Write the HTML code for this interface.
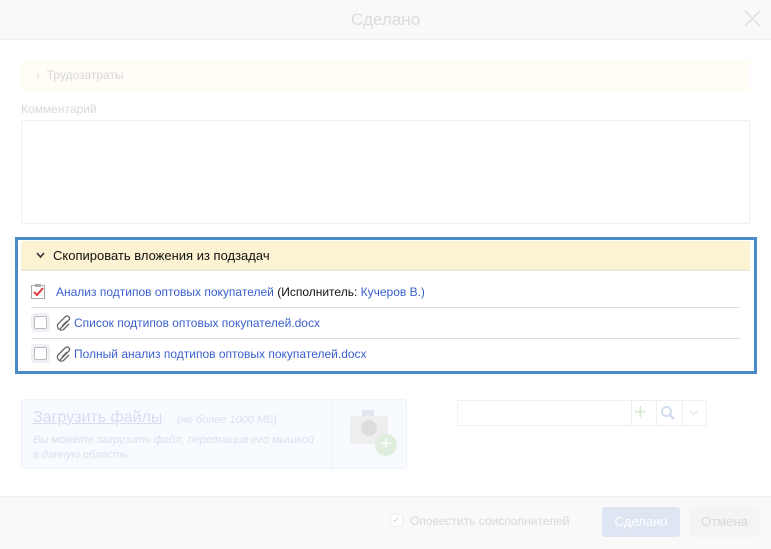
<!DOCTYPE html>
<html><head><meta charset="utf-8"><style>
*{box-sizing:border-box;margin:0;padding:0}
body{width:771px;height:549px;background:#fff;font-family:"Liberation Sans",sans-serif;position:relative;overflow:hidden;font-size:12px}
.a{position:absolute}
</style></head><body>
<div class="a" style="left:0;top:0;width:771px;height:40px;background:#f9f9f9;border-bottom:1px solid #f0f0f0"></div>
<div class="a" style="left:0;top:10px;width:771px;text-align:center;font-size:17px;color:#dcdcdc">Сделано</div>
<svg class="a" style="left:744px;top:10px" width="17" height="17"><path d="M1 1L16 16M16 1L1 16" stroke="#e2e2e2" stroke-width="1.6"/></svg>
<div class="a" style="left:21px;top:60px;width:729px;height:31px;background:#fffdf6"></div>
<div class="a" style="left:36px;top:68px;color:#d8d8d8;font-size:12px">›&nbsp; Трудозатраты</div>
<div class="a" style="left:21px;top:102px;color:#d8d8d8;font-size:12px">Комментарий</div>
<div class="a" style="left:21px;top:120px;width:729px;height:104px;border:1px solid #f0f0f0"></div>
<div class="a" style="left:15px;top:237px;width:742px;height:137px;border:3px solid #4a8ac6"></div>
<div class="a" style="left:21px;top:241px;width:729px;height:30px;background:#fcf3d2;border-bottom:2px solid #f0ead8"></div>
<svg class="a" style="left:36px;top:252px" width="9" height="7"><path d="M1 1L4.5 5L8 1" stroke="#333" stroke-width="1.6" fill="none"/></svg>
<div class="a" style="left:53px;top:248px;font-size:13px;color:#111">Скопировать вложения из подзадач</div>
<svg class="a" style="left:30px;top:283px" width="16" height="16"><rect x="1.5" y="2.5" width="13" height="13" fill="#fff" stroke="#aaa"/><rect x="5" y="1" width="6" height="3" fill="#aaa"/><path d="M4 9L7 12L13 5" stroke="#e0393e" stroke-width="2" fill="none"/></svg>
<div class="a" style="left:56px;top:285px;font-size:12px;color:#111"><span style="color:#3a5fcd">Анализ подтипов оптовых покупателей</span> (Исполнитель: <span style="color:#3a5fcd">Кучеров В.)</span></div>
<div class="a" style="left:31px;top:307px;width:709px;border-top:1px solid #ddd"></div>
<div class="a" style="left:31px;top:338px;width:709px;border-top:1px solid #ddd"></div>
<div class="a" style="left:31px;top:313px;width:19px;height:19px;background:#edf1f6;border-radius:4px"><div style="margin:3px;width:13px;height:13px;border:1px solid #bbb;background:#fff;border-radius:2px"></div></div>
<div class="a" style="left:31px;top:344px;width:19px;height:19px;background:#edf1f6;border-radius:4px"><div style="margin:3px;width:13px;height:13px;border:1px solid #bbb;background:#fff;border-radius:2px"></div></div>
<svg class="a" style="left:56px;top:315px" width="16" height="16"><path d="M4 14L13 5a2.5 2.5 0 0 0-3.5-3.5L2 9a4 4 0 0 0 5.5 5.5L13 9M6 11l5-5" stroke="#666" stroke-width="1.3" fill="none"/></svg>
<svg class="a" style="left:56px;top:346px" width="16" height="16"><path d="M4 14L13 5a2.5 2.5 0 0 0-3.5-3.5L2 9a4 4 0 0 0 5.5 5.5L13 9M6 11l5-5" stroke="#666" stroke-width="1.3" fill="none"/></svg>
<div class="a" style="left:74px;top:316px;color:#3a5fcd">Список подтипов оптовых покупателей.docx</div>
<div class="a" style="left:74px;top:347px;color:#3a5fcd">Полный анализ подтипов оптовых покупателей.docx</div>
<div class="a" style="left:21px;top:399px;width:386px;height:70px;background:#f7faff;border:1px solid #eef2f8;border-radius:3px"></div>
<div class="a" style="left:332px;top:400px;width:1px;height:68px;background:#eef0f4"></div>
<div class="a" style="left:33px;top:409px;font-size:16px;color:#d7dcef;text-decoration:underline">Загрузить файлы</div>
<div class="a" style="left:177px;top:414px;font-size:11px;font-style:italic;color:#dde0ea">(не более 1000 МБ)</div>
<div class="a" style="left:33px;top:433px;font-size:11px;font-style:italic;color:#dde0ea;line-height:15px">Вы можете загрузить файл, перетащив его мышкой<br>в данную область</div>
<div class="a" style="left:362px;top:410px;width:12px;height:8px;background:#dfe6ef;border-radius:2px"></div>
<div class="a" style="left:350px;top:416px;width:38px;height:28px;background:#eeeeee;border-radius:3px"></div>
<div class="a" style="left:361px;top:420px;width:16px;height:16px;background:#dddddd;border-radius:50%"></div>
<div class="a" style="left:375px;top:434px;width:22px;height:22px;background:#dfeedd;border-radius:50%;color:#fff;font-size:20px;line-height:21px;text-align:center">+</div>
<div class="a" style="left:457px;top:400px;width:250px;height:26px;border:1px solid #f0f0f0"></div>
<div class="a" style="left:631px;top:401px;width:1px;height:24px;background:#f0f0f0"></div>
<div class="a" style="left:656px;top:401px;width:1px;height:24px;background:#f0f0f0"></div>
<div class="a" style="left:682px;top:401px;width:1px;height:24px;background:#f0f0f0"></div>
<div class="a" style="left:634px;top:399px;color:#d4e8cf;font-size:22px">+</div>
<svg class="a" style="left:660px;top:405px" width="16" height="16"><circle cx="6.5" cy="6.5" r="4.5" stroke="#d0dcee" stroke-width="2" fill="none"/><path d="M10 10L14 14" stroke="#d0dcee" stroke-width="2.5"/></svg>
<svg class="a" style="left:689px;top:410px" width="9" height="6"><path d="M1 1L4.5 4.5L8 1" stroke="#ddd" fill="none"/></svg>
<div class="a" style="left:0;top:496px;width:771px;height:53px;background:#f9f9f9;border-top:1px solid #f0f0f0"></div>
<div class="a" style="left:390px;top:514px;width:13px;height:13px;background:#fff;border:1px solid #eee;color:#d0d8ea;font-size:10px;text-align:center;line-height:12px">✓</div>
<div class="a" style="left:410px;top:514px;color:#d8d8d8;font-size:12px">Оповестить соисполнителей</div>
<div class="a" style="left:602px;top:507px;width:78px;height:30px;background:#dde6f2;border-radius:3px;color:#fff;text-align:center;line-height:30px;font-size:13px">Сделано</div>
<div class="a" style="left:689px;top:507px;width:71px;height:30px;background:#f4f4f4;border-radius:3px;color:#d8d8d8;text-align:center;line-height:30px;font-size:13px">Отмена</div>
</body></html>
